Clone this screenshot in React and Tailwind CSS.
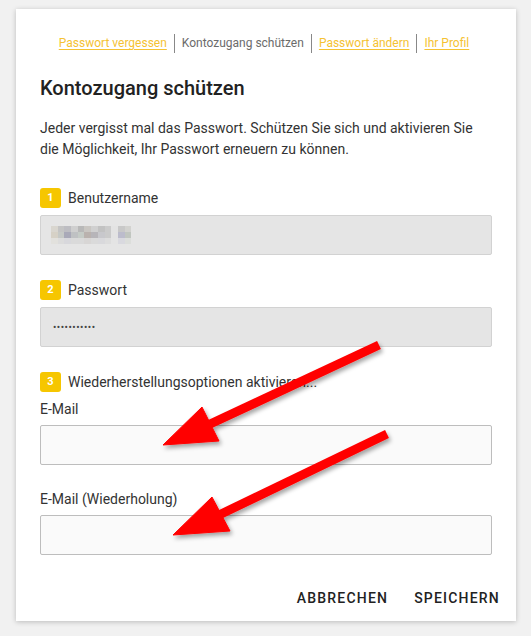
import React from "react";

const pix = [
  ["bg-[#d9d6cf]","bg-[#c4c4c4]","bg-[#bdbdc2]","bg-[#cfcfcf]","bg-[#b8b8b8]","bg-[#c9c6c2]","bg-[#d0d0d0]","bg-[#c2c2c2]","bg-[#cbcbcb]","bg-[#e3e3e3]","bg-[#c8c8c8]","bg-[#d2d2cf]"],
  ["bg-[#d6d1c6]","bg-[#c6c9c6]","bg-[#a9a9b8]","bg-[#bfc1c3]","bg-[#c5cbc6]","bg-[#bab2ae]","bg-[#b7b5b9]","bg-[#c8c8cc]","bg-[#cbcbcb]","bg-[#e3e3e3]","bg-[#bcbccc]","bg-[#c1c6c0]"],
  ["bg-[#e2e1dd]","bg-[#dcdcdc]","bg-[#d8d8dc]","bg-[#dadada]","bg-[#dadada]","bg-[#d8d6d5]","bg-[#dadada]","bg-[#d9d9dc]","bg-[#dddddd]","bg-[#e4e4e4]","bg-[#d9d9df]","bg-[#dcdedb]"],
];

function Step({ n, children }) {
  return (
    <div className="flex items-center h-5">
      <div className="w-[21px] h-[20px] rounded-[3px] bg-[#f6c600] text-white text-[11px] font-bold flex items-center justify-center">
        {n}
      </div>
      <span className="ml-[7px] text-[14px] text-[#333]">{children}</span>
    </div>
  );
}

export default function App() {
  return (
    <div
      className="relative w-[531px] h-[636px] bg-[#f1f1f1] overflow-hidden"
      style={{ fontFamily: "Roboto, 'Liberation Sans', sans-serif" }}
    >
      <div className="absolute left-4 top-[9px] w-[500px] h-[612px] bg-white shadow-[0_1px_5px_rgba(0,0,0,0.22)]">
        <div className="px-6 pt-[24px]">
          {/* nav */}
          <div className="flex justify-center items-center h-[20px] text-[12px] pl-[6px] pr-[10px]">
            <a className="text-[#f5c233] underline underline-offset-2 decoration-[#f5c233] pr-[7px]">Passwort vergessen</a>
            <span className="w-px h-[19px] bg-[#888]" />
            <span className="text-[#6b6b6b] px-[7px]">Kontozugang schützen</span>
            <span className="w-px h-[19px] bg-[#888]" />
            <a className="text-[#f5c233] underline underline-offset-2 decoration-[#f5c233] px-[7px]">Passwort ändern</a>
            <span className="w-px h-[19px] bg-[#888]" />
            <a className="text-[#f5c233] underline underline-offset-2 decoration-[#f5c233] pl-[7px]">Ihr Profil</a>
          </div>

          <h1 className="mt-[21px] text-[20px] leading-[28px] font-medium text-[#222]">
            Kontozugang schützen
          </h1>

          <p className="mt-[16px] text-[14px] leading-[21px] text-[#333]">
            Jeder vergisst mal das Passwort. Schützen Sie sich und aktivieren Sie die Möglichkeit, Ihr Passwort erneuern zu können.
          </p>

          <div className="mt-[28px]">
            <Step n="1">Benutzername</Step>
          </div>
          <div className="mt-[7px] h-[40px] rounded-[2px] border border-[#d2d2d2] bg-[#e5e5e5] flex items-center pl-[10px]">
            <div className="flex flex-col blur-[0.6px]">
              {pix.map((row, i) => (
                <div key={i} className="flex">
                  {row.map((c, j) => (
                    <div key={j} className={"w-[6.7px] h-[5.7px] " + c} />
                  ))}
                </div>
              ))}
            </div>
          </div>

          <div className="mt-[25px]">
            <Step n="2">Passwort</Step>
          </div>
          <div className="mt-[7px] h-[40px] rounded-[2px] border border-[#d2d2d2] bg-[#e5e5e5] flex items-center pl-[12px]">
            <span className="text-[10px] tracking-[0.5px] text-[#444]">•••••••••••</span>
          </div>

          <div className="mt-[25px]">
            <Step n="3">Wiederherstellungsoptionen aktivieren...</Step>
          </div>

          <div className="mt-[7px] text-[14px] leading-[20px] text-[#333]">E-Mail</div>
          <div className="mt-[6px] h-[40px] rounded-[2px] border border-[#bdbdbd] bg-[#fafafa]" />

          <div className="mt-[24px] text-[14px] leading-[20px] text-[#333]">E-Mail (Wiederholung)</div>
          <div className="mt-[6px] h-[40px] rounded-[2px] border border-[#bdbdbd] bg-[#fafafa]" />
        </div>

        <div className="mt-[25px] flex justify-end gap-[26px] pr-[16px] h-[36px] items-center">
          <button className="text-[14px] font-medium tracking-[1.2px] text-[#222]">ABBRECHEN</button>
          <button className="text-[14px] font-medium tracking-[1.2px] text-[#222]">SPEICHERN</button>
        </div>
      </div>

      <svg className="absolute inset-0 pointer-events-none" width="531" height="636" viewBox="0 0 531 636">
        <defs>
          <filter id="sh" x="-20%" y="-20%" width="140%" height="140%">
            <feDropShadow dx="2" dy="3" stdDeviation="2" floodColor="#000" floodOpacity="0.35" />
          </filter>
        </defs>
        <g filter="url(#sh)" fill="#ff0000" stroke="#ff0000">
          <line x1="379" y1="345" x2="208" y2="425" strokeWidth="9" />
          <polygon points="163,445 202,407 219,441" strokeWidth="1" strokeLinejoin="round" />
          <line x1="387" y1="434" x2="219" y2="515" strokeWidth="9" />
          <polygon points="173,535 212,497 230,531" strokeWidth="1" strokeLinejoin="round" />
        </g>
      </svg>
    </div>
  );
}
